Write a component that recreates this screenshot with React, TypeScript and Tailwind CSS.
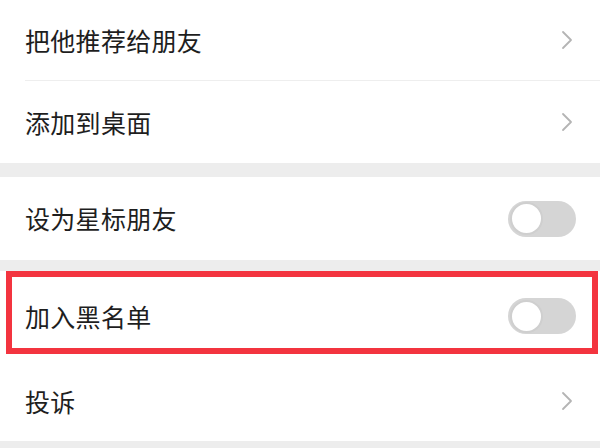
import React from 'react'

const Chevron = () => (
  <svg width="12" height="20" viewBox="0 0 12 20" fill="none" className="mr-[27px]">
    <path d="M2 2 L10 10 L2 18" stroke="#b4b4b4" strokeWidth="1.8" strokeLinecap="round" strokeLinejoin="round" />
  </svg>
)

const Toggle = () => (
  <div className="mr-[24px] w-[68px] h-[36px] rounded-full bg-[#d5d5d5] flex items-center px-[2px]">
    <div className="w-[33px] h-[33px] rounded-full bg-white border-2 border-[#cfcfcf]" />
  </div>
)

const Label = ({ children }: { children: React.ReactNode }) => (
  <span className="pl-[25px] text-[25px] leading-none text-[#1e1e1e] tracking-[0.3px]">{children}</span>
)

export default function App() {
  return (
    <div className="w-[600px] h-[448px] overflow-hidden bg-[#ededed] font-['Noto_Sans_CJK_SC','Noto_Sans',sans-serif]">
      <div className="bg-white">
        <div className="h-[80px] flex items-center justify-between">
          <Label>把他推荐给朋友</Label>
          <Chevron />
        </div>
        <div className="ml-[25px] h-px bg-[#eeeeee]" />
        <div className="h-[82px] flex items-center justify-between">
          <Label>添加到桌面</Label>
          <Chevron />
        </div>
      </div>

      <div className="mt-[14px] bg-white h-[83px] flex items-center justify-between">
        <Label>设为星标朋友</Label>
        <Toggle />
      </div>

      <div className="mt-[11px] bg-white">
        <div className="relative h-[84px] pt-[6px] flex items-center justify-between">
          <Label>加入黑名单</Label>
          <Toggle />
          <div className="absolute left-[6px] right-[2px] top-0 bottom-[1px] border-[6px] border-[#f3343f] pointer-events-none" />
        </div>
        <div className="h-[86px] pt-[6px] flex items-center justify-between">
          <Label>投诉</Label>
          <Chevron />
        </div>
      </div>
    </div>
  )
}
